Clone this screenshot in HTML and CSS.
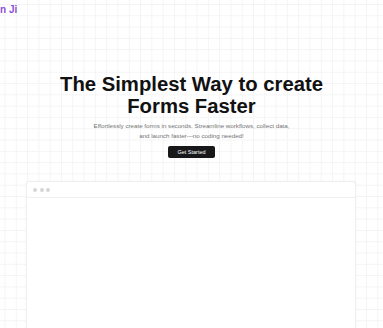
FILE: index.html
```html
<!DOCTYPE html>
<html lang="en">
<head>
<meta charset="utf-8">
<title>Forms</title>
<link rel="stylesheet" href="styles.css">
</head>
<body>
<div class="page">
  <header class="topbar">
    <span class="logo">n Ji</span>
  </header>
  <section class="hero">
    <h1 class="title">The Simplest Way to create<br>Forms Faster</h1>
    <p class="subtitle">Effortlessly create forms in seconds. Streamline workflows, collect data, and launch faster—no coding needed!</p>
    <a class="cta" href="#">Get Started</a>
  </section>
  <section class="preview">
    <div class="window">
      <div class="window-bar">
        <span class="dot"></span><span class="dot"></span><span class="dot"></span>
      </div>
      <div class="window-body"></div>
    </div>
  </section>
</div>
</body>
</html>
```
FILE: styles.css
```css
html, body {
  margin: 0;
  padding: 0;
  height: 100%;
  overflow: hidden;
}
body {
  font-family: "Liberation Sans", Arial, sans-serif;
  background-color: #ffffff;
  background-image:
    linear-gradient(to right, #f4f4f4 1px, transparent 1px),
    linear-gradient(to bottom, #f4f4f4 1px, transparent 1px);
  background-size: 11.3px 11.3px;
  background-position: 4.5px 4px;
}
.page {
  display: flex;
  flex-direction: column;
}
.topbar {
  height: 20px;
  padding-top: 4px;
  box-sizing: border-box;
}
.logo {
  display: block;
  font-size: 10px;
  line-height: 12px;
  font-weight: 700;
  color: #8b4fd6;
}
.hero {
  display: flex;
  flex-direction: column;
  align-items: center;
  text-align: center;
  padding-top: 53px;
}
.title {
  margin: 0;
  font-size: 20.3px;
  line-height: 22px;
  font-weight: 700;
  color: #111111;
}
.subtitle {
  margin: 4px 0 0;
  max-width: 200px;
  font-size: 6.2px;
  line-height: 10px;
  color: #737373;
}
.cta {
  margin-top: 5px;
  display: block;
  background: #18181b;
  color: #ffffff;
  text-decoration: none;
  font-size: 5.5px;
  line-height: 12px;
  padding: 0 9px;
  border-radius: 2px;
}
.preview {
  padding: 23px 27px 0 26px;
}
.window {
  background: #ffffff;
  border: 1px solid #efefef;
  border-bottom: none;
  border-radius: 3px 3px 0 0;
  box-shadow: 0 0 3px rgba(0, 0, 0, 0.04);
  height: 160px;
}
.window-bar {
  display: flex;
  gap: 2.5px;
  align-items: center;
  height: 15px;
  padding-left: 6px;
  border-bottom: 1px solid #efefef;
}
.dot {
  width: 4px;
  height: 4px;
  border-radius: 50%;
  background: #d6d6d6;
}
```
